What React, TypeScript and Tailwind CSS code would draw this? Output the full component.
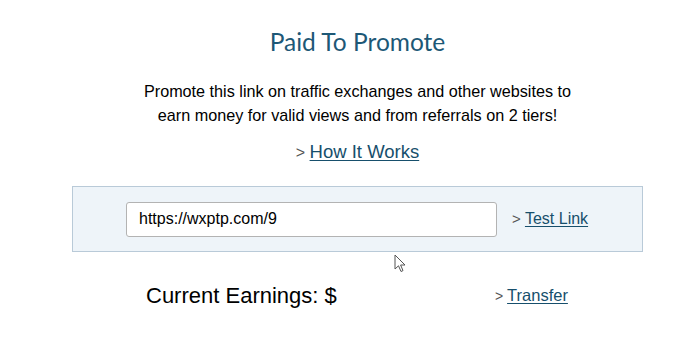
import React from 'react';

const sans = { fontFamily: '"Liberation Sans", Arial, sans-serif' };

export default function App() {
  return (
    <div className="relative w-[700px] h-[340px] bg-white overflow-hidden" style={sans}>
      <div className="ml-[72px] w-[571px] pt-[27px] flex flex-col">
        {/* Title */}
        <h1
          className="text-center text-[24.5px] leading-[30px] text-[#1d5876] font-normal"
          style={{ fontFamily: 'Lato, "Open Sans", sans-serif' }}
        >
          Paid To Promote
        </h1>

        {/* Description */}
        <p className="mt-[22px] text-center text-[16.2px] leading-[24px] text-black">
          Promote this link on traffic exchanges and other websites to
          <br />
          earn money for valid views and from referrals on 2 tiers!
        </p>

        <div className="mt-[13px] text-center text-[18.5px] leading-[24px]">
          <span className="text-[#555] text-[16px]">&gt; </span>
          <a href="#" className="text-[#174f6c] underline underline-offset-2">How It Works</a>
        </div>

        {/* Link box */}
        <div className="mt-[21px] h-[66px] border border-[#b9cad8] bg-[#eef4f9] flex items-center pl-[53px]">
          <div className="w-[371px] h-[35px] bg-white border border-[#b3b3b3] rounded-[3px] flex items-center pl-[12px] text-[16px] text-black">
            https://wxptp.com/9
          </div>
          <div className="ml-[15px] text-[16px]">
            <span className="text-[#555] text-[15px]">&gt; </span>
            <a href="#" className="text-[#174f6c] underline underline-offset-2">Test Link</a>
          </div>
        </div>

        {/* Earnings */}
        <div className="mt-[29px] flex items-center pl-[74px] h-[28px]">
          <span className="w-[349px] text-[22px] text-black">Current Earnings: $</span>
          <span className="text-[16.5px]">
            <span className="text-[#555] text-[14px]">&gt; </span>
            <a href="#" className="text-[#174f6c] underline underline-offset-2">Transfer</a>
          </span>
        </div>
      </div>

      {/* mouse cursor */}
      <svg className="absolute left-[394px] top-[254px]" width="13" height="19" viewBox="0 0 13 19">
        <path d="M1 1 L1 15 L4.5 11.8 L7 17.5 L9 16.6 L6.6 11 L11 11 Z" fill="#fff" stroke="#555" strokeWidth="1" strokeLinejoin="round" />
      </svg>
    </div>
  );
}
